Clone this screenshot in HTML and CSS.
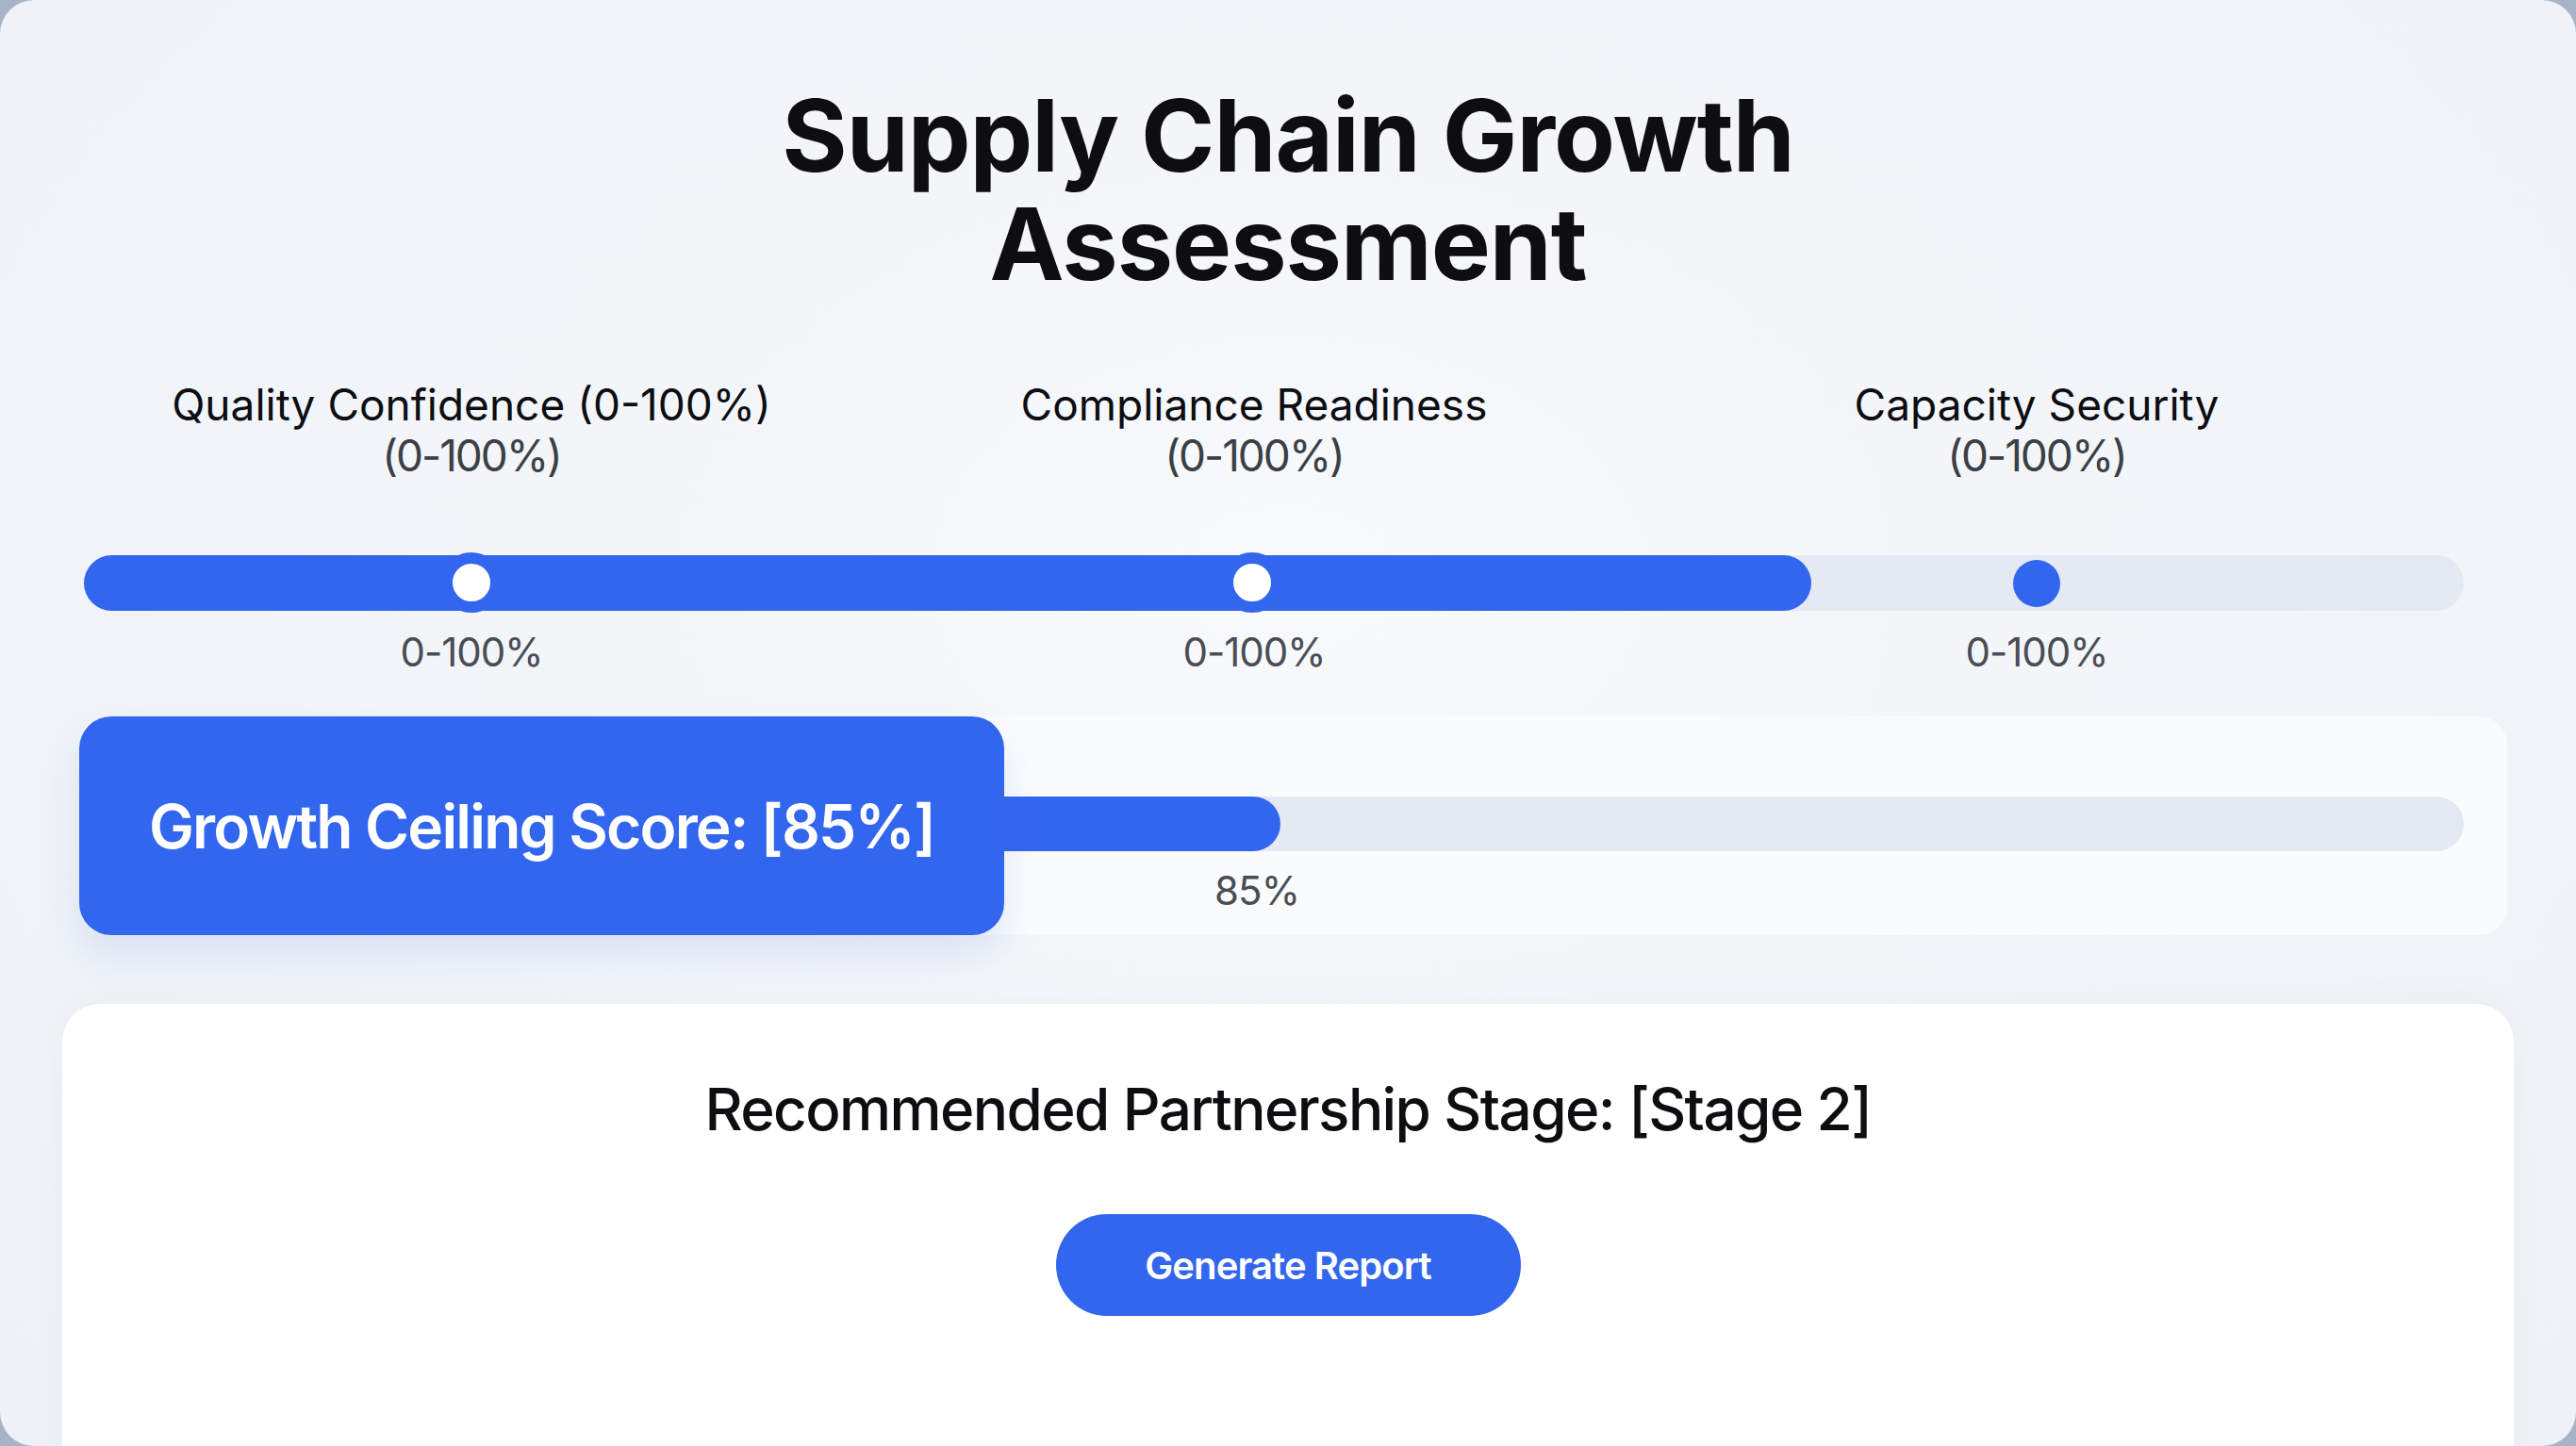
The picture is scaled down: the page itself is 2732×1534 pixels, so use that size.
FILE: index.html
```html
<!doctype html>
<html>
<head>
	<title>Supply Chain Growth Assessment</title>
	<meta charset="utf-8">
	<link rel="stylesheet" href="styles.css">
</head>
<body>
	<div class="frame">
		<h1 class="title">Supply Chain Growth<br>Assessment</h1>

		<div class="sliders">
			<div class="labels">
				<div class="label">Quality Confidence (0-100%)<br><span class="sub">(0-100%)</span></div>
				<div class="label">Compliance Readiness<br><span class="sub">(0-100%)</span></div>
				<div class="label">Capacity Security<br><span class="sub">(0-100%)</span></div>
			</div>
			<div class="track">
				<div class="track-fill" style="width: 72.6%"></div>
				<div class="thumb" style="left: 16.3%"></div>
				<div class="thumb" style="left: 49.1%"></div>
				<div class="thumb thumb-solid" style="left: 82.05%"></div>
			</div>
			<div class="labels values">
				<div class="value">0-100%</div>
				<div class="value">0-100%</div>
				<div class="value">0-100%</div>
			</div>
		</div>

		<div class="score-panel">
			<div class="score-box">Growth Ceiling Score: [85%]</div>
			<div class="score-bar-wrap">
				<div class="score-bar">
					<div class="score-fill" style="width: 18.9%"></div>
				</div>
				<div class="score-value">85%</div>
			</div>
		</div>

		<div class="stage-card">
			<div class="stage-text">Recommended Partnership Stage: [Stage 2]</div>
			<button class="report-btn">Generate Report</button>
		</div>
	</div>
</body>
</html>
```

FILE: styles.css
```css
	html, body {
		margin: 0;
		padding: 0;
		background: #a7b3c6;
	}
	.frame {
		height: 1534px;
		overflow: hidden;
		border-radius: 36px;
		background: radial-gradient(ellipse at 50% 40%, #f7f9fb 0%, #f1f4f8 60%, #eef2f7 100%);
		font-family: Inter, "Liberation Sans", sans-serif;
		color: #0d0d12;
	}
	.title {
		margin: 0;
		padding-top: 86px;
		text-align: center;
		font-size: 106px;
		line-height: 115px;
		font-weight: 700;
		letter-spacing: -1px;
	}
	.sliders {
		padding: 86px 119px 0 89px;
	}
	.labels {
		display: grid;
		grid-template-columns: 830px 830px 830px;
		margin-left: -4px;
		text-align: center;
	}
	.label {
		font-size: 46px;
		line-height: 54px;
	}
	.sub {
		color: #3c3f46;
		letter-spacing: -2px;
	}
	.track {
		position: relative;
		height: 59px;
		margin-top: 79px;
		border-radius: 30px;
		background: #e4e9f3;
	}
	.track-fill {
		height: 100%;
		border-radius: 30px;
		background: #3366ee;
	}
	.thumb {
		position: absolute;
		top: 50%;
		width: 40px;
		height: 40px;
		margin: -33px 0 0 -32px;
		border: 12px solid #3366ee;
		border-radius: 50%;
		background: #fff;
	}
	.thumb-solid {
		width: 50px;
		height: 50px;
		margin: -25px 0 0 -25px;
		border: 0;
		background: #3366ee;
	}
	.values {
		margin-top: 19px;
	}
	.value {
		font-size: 42px;
		line-height: 50px;
		color: #4a4d55;
		letter-spacing: -1px;
	}
	.score-panel {
		display: flex;
		margin: 43px 73px 0 84px;
		height: 232px;
		border-radius: 30px;
		background: #f9fbfd;
	}
	.score-box {
		display: flex;
		align-items: center;
		justify-content: center;
		width: 981px;
		flex-shrink: 0;
		border-radius: 34px;
		background: #3366ee;
		color: #fff;
		font-size: 64px;
		font-weight: 600;
		letter-spacing: -1.8px;
		box-shadow: 0 22px 40px rgba(60, 100, 210, 0.13);
		position: relative;
		z-index: 1;
	}
	.score-bar-wrap {
		flex: 1;
		padding: 85px 46px 0 0;
	}
	.score-bar {
		height: 58px;
		border-radius: 0 30px 30px 0;
		background: #e4e9f3;
	}
	.score-fill {
		height: 100%;
		border-radius: 0 30px 30px 0;
		background: #3366ee;
	}
	.score-value {
		width: 536px;
		margin-top: 17px;
		text-align: center;
		font-size: 42px;
		line-height: 50px;
		color: #4a4d55;
		letter-spacing: -1px;
	}
	.stage-card {
		margin: 73px 66px 0 66px;
		height: 700px;
		padding-top: 72px;
		border-radius: 40px;
		background: #fff;
		box-shadow: 0 -4px 30px rgba(120, 140, 180, 0.06);
		text-align: center;
	}
	.stage-text {
		font-size: 62px;
		line-height: 80px;
		font-weight: 500;
		letter-spacing: -1.6px;
	}
	.report-btn {
		margin-top: 71px;
		width: 493px;
		height: 108px;
		border: 0;
		border-radius: 54px;
		background: #3366ee;
		color: #fff;
		font-family: Inter, "Liberation Sans", sans-serif;
		font-size: 40px;
		font-weight: 600;
		letter-spacing: -0.9px;
	}
```
